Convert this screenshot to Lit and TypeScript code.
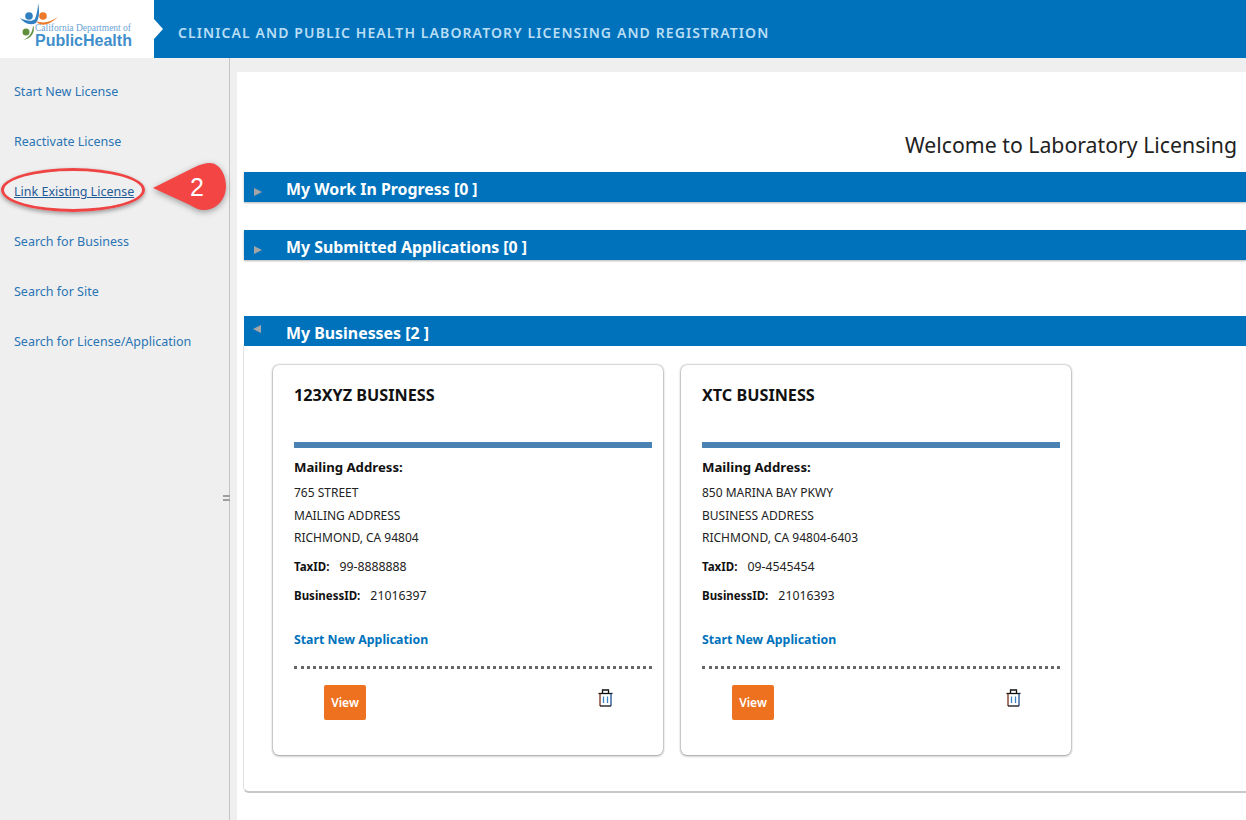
import { LitElement, html, css, svg } from "lit";
import { customElement } from "lit/decorators.js";

const navItems = [
  "Start New License",
  "Reactivate License",
  "Link Existing License",
  "Search for Business",
  "Search for Site",
  "Search for License/Application",
];

const businesses = [
  {
    name: "123XYZ BUSINESS",
    lines: ["765 STREET", "MAILING ADDRESS", "RICHMOND, CA 94804"],
    taxId: "99-8888888",
    businessId: "21016397",
  },
  {
    name: "XTC BUSINESS",
    lines: ["850 MARINA BAY PKWY", "BUSINESS ADDRESS", "RICHMOND, CA 94804-6403"],
    taxId: "09-4545454",
    businessId: "21016393",
  },
];

const logo = svg`
  <svg width="154" height="58" viewBox="0 0 154 58" class="logo-mark">
    <path d="M20 18 C26 21 32 22 35 19 C37 14 38 8 38 3 C40 12 39 19 36 23 C30 26 24 23 20 18Z" fill="#2f7fc1"/>
    <circle cx="29" cy="16" r="3.800" fill="#2f7fc1"/>
    <path d="M36 21 C44 24 50 22 58 17 C51 24 41 28 36 21Z" fill="#ec7a2a"/>
    <circle cx="43" cy="16" r="3.800" fill="#ec7a2a"/>
    <circle cx="26" cy="32" r="3.500" fill="#5e8f3c"/>
    <path d="M23 40 C29 38 33 32 33 25 C36 32 31 39 23 40Z" fill="#5e8f3c"/>
  </svg>`;

const trash = svg`
  <svg width="15" height="18" viewBox="0 0 15 18" fill="none" stroke="#111" stroke-width="1.300">
    <path d="M0.500 4.500H14.500"/>
    <path d="M4.500 4V1H10.500V4"/>
    <path d="M2 4.500V17" stroke="#7a2f1c"/>
    <path d="M13 4.500V17" stroke="#1f4f8f"/>
    <path d="M2 17H13"/>
    <path d="M5.500 7.500V14M9.500 7.500V14" stroke="#3a86c8"/>
  </svg>`;

@customElement("app-root")
export class AppRoot extends LitElement {
  static styles = css`
    :host {
      display: block;
      width: 1246px;
      height: 820px;
      overflow: hidden;
      position: relative;
      background: #fff;
      font-family: "Noto Sans", "Liberation Sans", sans-serif;
      font-size: 12.500px;
      color: #222;
    }
    .top {
      height: 58px;
      display: flex;
      background: #0072bc;
    }
    .brand {
      width: 154px;
      background: #fff;
      position: relative;
      flex: none;
    }
    .brand::after {
      content: "";
      position: absolute;
      left: 154px;
      top: 19px;
      border-left: 9px solid #fff;
      border-top: 10px solid transparent;
      border-bottom: 10px solid transparent;
    }
    .logo-mark {
      position: absolute;
      left: 0;
      top: 0;
    }
    .logo-small {
      position: absolute;
      left: 35px;
      top: 23px;
      font-family: "Liberation Serif", serif;
      font-size: 9.500px;
      color: #6aa4d4;
      white-space: nowrap;
    }
    .logo-big {
      position: absolute;
      left: 35px;
      top: 32px;
      font-family: "Liberation Sans", sans-serif;
      font-size: 16px;
      font-weight: 700;
      color: #3f8ecb;
      white-space: nowrap;
    }
    .title {
      padding-left: 24px;
      line-height: 65px;
      font-size: 14px;
      font-weight: 600;
      letter-spacing: 1.100px;
      color: #b9def5;
      white-space: nowrap;
    }
    .body {
      display: flex;
      height: 762px;
    }
    .side {
      width: 229px;
      flex: none;
      background: #efefef;
      border-right: 1px solid #c4c4c4;
      padding-top: 9px;
      position: relative;
    }
    .side a {
      display: block;
      height: 50px;
      line-height: 50px;
      padding-left: 14px;
      color: #2a74b4;
      white-space: nowrap;
    }
    .side a.on {
      text-decoration: underline;
      color: #1f5a96;
    }
    .grip {
      position: absolute;
      left: 223px;
      top: 437px;
      width: 7px;
      height: 2px;
      border-top: 2px solid #a0a0a0;
      border-bottom: 2px solid #a0a0a0;
    }
    .gutter {
      width: 7px;
      flex: none;
      background: #efefef;
    }
    .main {
      flex: 1;
      min-width: 0;
      background: #fff;
    }
    .strip {
      height: 14px;
      background: #efefef;
    }
    .panel {
      margin-left: 7px;
    }
    h1 {
      margin: 0;
      padding-top: 59px;
      padding-right: 9px;
      text-align: right;
      font-size: 21.250px;
      font-weight: 400;
      line-height: 27px;
      height: 41px;
      color: #222;
    }
    .bar {
      height: 30px;
      background: #0072bc;
      color: #fff;
      font-size: 15.900px;
      font-weight: 700;
      line-height: 34px;
      padding-left: 42px;
      position: relative;
      box-shadow: 0 1px 2px rgba(0, 0, 0, 0.3);
    }
    .bar::before {
      content: "";
      position: absolute;
      left: 10px;
      top: 16px;
      border-left: 8px solid #a5a5a5;
      border-top: 4.500px solid transparent;
      border-bottom: 4.500px solid transparent;
    }
    .bar.open {
      box-shadow: none;
    }
    .bar.open::before {
      left: 9px;
      top: 9px;
      border-left: 0;
      border-right: 8px solid #a5a5a5;
    }
    .gap28 {
      margin-top: 28px;
    }
    .gap56 {
      margin-top: 56px;
    }
    .cards {
      display: flex;
      gap: 18px;
      height: 447px;
      box-sizing: border-box;
      margin-left: -1px;
      padding: 19px 0 0 29px;
      border-left: 1px solid #e2e2e2;
      border-bottom: 2px solid #c8c8c8;
      border-radius: 0 0 0 6px;
    }
    .card {
      width: 390px;
      height: 390px;
      flex: none;
      box-sizing: border-box;
      border-radius: 6px;
      background: #fff;
      box-shadow: 0 0 2px rgba(0, 0, 0, 0.45), 0 1px 3px rgba(0, 0, 0, 0.3);
      padding: 0 11px 0 21px;
    }
    .card h2 {
      margin: 0;
      padding-top: 18px;
      font-size: 16.200px;
      line-height: 24px;
      font-weight: 700;
      color: #111;
    }
    .rule {
      margin-top: 35px;
      height: 6px;
      background: #4a82b4;
    }
    .label {
      font-weight: 700;
      color: #111;
    }
    .mail {
      margin-top: 11px;
      line-height: 17px;
      font-size: 13.200px;
    }
    .addr {
      line-height: 22.500px;
      margin-top: 6px;
      font-size: 12px;
    }
    .pair {
      display: flex;
      gap: 10px;
      line-height: 29px;
      font-size: 12.300px;
    }
    .pair .label {
      font-size: 11.500px;
    }
    .tax {
      margin-top: 2px;
    }
    .start {
      display: block;
      margin-top: 21px;
      line-height: 18px;
      font-weight: 700;
      font-size: 12.300px;
      color: #0072bc;
    }
    .dots {
      margin-top: 17px;
      border-top: 3px dotted #666;
    }
    .foot {
      display: flex;
      justify-content: space-between;
      align-items: flex-start;
      padding: 16px 39px 0 30px;
    }
    .view {
      width: 42px;
      height: 35px;
      border-radius: 2px;
      background: #ee7120;
      color: #fff;
      font-weight: 600;
      font-size: 12px;
      line-height: 35px;
      text-align: center;
    }
    .foot svg {
      margin-top: 4px;
    }
    .ring {
      position: absolute;
      left: 1px;
      top: 168px;
      width: 144px;
      height: 44px;
      box-sizing: border-box;
      border: 3px solid #ee4444;
      border-radius: 50%;
      box-shadow: 0 2px 4px rgba(0, 0, 0, 0.35);
    }
    .pin {
      position: absolute;
      left: 150px;
      top: 160px;
      filter: drop-shadow(0 2px 3px rgba(0, 0, 0, 0.35));
    }
    .pin-num {
      position: absolute;
      left: 190px;
      top: 172px;
      font-family: "Liberation Sans", sans-serif;
      font-size: 25px;
      line-height: 30px;
      color: #fff;
    }
  `;

  render() {
    return html`
      <div class="top">
        <div class="brand">
          ${logo}
          <span class="logo-small">California Department of</span>
          <span class="logo-big">PublicHealth</span>
        </div>
        <div class="title">CLINICAL AND PUBLIC HEALTH LABORATORY LICENSING AND REGISTRATION</div>
      </div>
      <div class="body">
        <div class="side">
          ${navItems.map(
            (n) => html`<a class=${n.startsWith("Link") ? "on" : ""}>${n}</a>`
          )}
          <div class="grip"></div>
        </div>
        <div class="gutter"></div>
        <div class="main">
          <div class="strip"></div>
          <div class="panel">
            <h1>Welcome to Laboratory Licensing</h1>
            <div class="bar">My Work In Progress [0 ]</div>
            <div class="bar gap28">My Submitted Applications [0 ]</div>
            <div class="bar open gap56">My Businesses [2 ]</div>
            <div class="cards">
              ${businesses.map(
                (b) => html`
                  <div class="card">
                    <h2>${b.name}</h2>
                    <div class="rule"></div>
                    <div class="label mail">Mailing Address:</div>
                    <div class="addr">${b.lines.map((l) => html`<div>${l}</div>`)}</div>
                    <div class="pair tax"><span class="label">TaxID:</span><span>${b.taxId}</span></div>
                    <div class="pair"><span class="label">BusinessID:</span><span>${b.businessId}</span></div>
                    <a class="start">Start New Application</a>
                    <div class="dots"></div>
                    <div class="foot">
                      <div class="view">View</div>
                      ${trash}
                    </div>
                  </div>
                `
              )}
            </div>
          </div>
        </div>
      </div>
      <div class="ring"></div>
      <svg class="pin" width="80" height="56" viewBox="0 0 80 56">
        <path d="M3 28 L44 7.500 C50 4.500 55 3 60 3 C69 3 76 14 76 26 C76 40 66 50 54 50 C49 50 45 48 40 45 Z" fill="#f44545"/>
      </svg>
      <div class="pin-num">2</div>
    `;
  }
}
